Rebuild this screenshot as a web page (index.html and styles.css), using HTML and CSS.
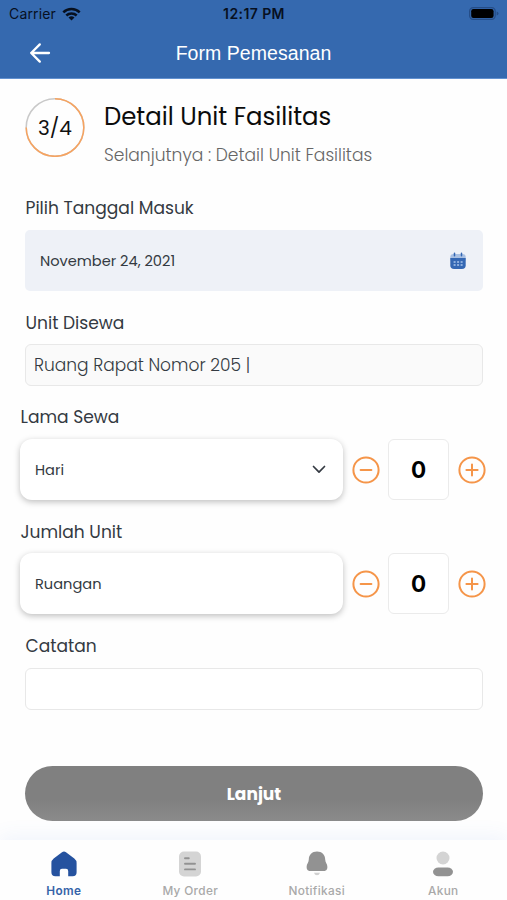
FILE: index.html
```html
<!DOCTYPE html>
<html lang="id">
<head>
<meta charset="utf-8">
<meta name="viewport" content="width=device-width, initial-scale=1">
<title>Form Pemesanan</title>
<link rel="stylesheet" href="styles.css">
</head>
<body>
<div class="screen">
  <header class="header">
    <div class="status">
      <div class="carrier"><span>Carrier</span>
        <svg width="19" height="14" viewBox="0 0 19 14" fill="none" stroke="#07101f" stroke-width="2.5"><path d="M1.3 5.4a11.7 11.7 0 0 1 16.4 0M4.3 8.5a7.5 7.5 0 0 1 10.4 0"/><path d="M9.5 13.6 6.5 10.6a4.3 4.3 0 0 1 6 0z" fill="#07101f" stroke="none"/></svg>
      </div>
      <span class="clock">12:17 PM</span>
      <svg class="battery" width="30" height="13" viewBox="0 0 30 13"><rect x=".6" y=".6" width="25.6" height="11.8" rx="3.6" fill="none" stroke="#254d87" stroke-width="1.2"/><rect x="2.2" y="2.1" width="22.4" height="8.8" rx="2.2" fill="#000"/><path d="M27.7 4.5q1.8.6 1.8 2t-1.8 2z" fill="#254d87"/></svg>
    </div>
    <div class="bar">
      <svg width="22" height="22" viewBox="0 0 22 22" fill="none" stroke="#fff" stroke-width="2.3" stroke-linecap="round" stroke-linejoin="round"><path d="M20 11H2.2M10.8 2.4 2.2 11l8.6 8.6"/></svg>
      <h1 class="bar-title">Form Pemesanan</h1>
    </div>
  </header>

  <main class="form">
    <section class="step">
      <div class="ring">
        <svg width="60" height="60" viewBox="0 0 60 60" fill="none" stroke-width="1.5"><circle cx="30" cy="30.500" r="28.8" stroke="#c9c9c9"/><path d="M30 1.7A28.8 28.8 0 1 1 1.2 30.5" stroke="#f7a35f"/></svg>
        <span class="ring-text">3/4</span>
      </div>
      <div class="step-text">
        <h2 class="step-title">Detail Unit Fasilitas</h2>
        <p class="step-next">Selanjutnya : Detail Unit Fasilitas</p>
      </div>
    </section>

    <div class="label label-date"><span>Pilih Tanggal Masuk</span></div>
    <div class="date">
      <span class="date-text">November 24, 2021</span>
      <svg width="16" height="18" viewBox="0 0 16 18"><rect x=".3" y="2" width="15.4" height="8" rx="3" fill="#a9c0e2"/><path d="M.3 6h15.4v7.2q0 3.8-3.8 3.8H4.1Q.3 17 .3 13.2z" fill="#3467b3"/><path d="M4.5 1.2v2.5M11.5 1.2v2.5" stroke="#3467b3" stroke-width="1.5" stroke-linecap="round"/><path d="M3.6 10h2m1.5 0h2m1.5 0h2M3.6 13h2m1.5 0h2m1.5 0h2" stroke="#a9c5ec" stroke-width="1.7"/></svg>
    </div>

    <div class="label label-unit"><span>Unit Disewa</span></div>
    <div class="field filled"><span class="room">Ruang Rapat Nomor 205 |</span></div>

    <div class="label label-wide label-duration"><span>Lama Sewa</span></div>
    <div class="quantity">
      <div class="card"><span class="day">Hari</span>
        <svg width="14" height="9" viewBox="0 0 14 9" fill="none" stroke="#343a42" stroke-width="1.7" stroke-linecap="round" stroke-linejoin="round"><path d="m1.5 1.5 5.5 5.6 5.5-5.6"/></svg>
      </div>
      <svg class="round" viewBox="0 0 28 28"><circle cx="14" cy="14" r="12.6"/><path d="M8.6 14h10.8"/></svg>
      <div class="count">0</div>
      <svg class="round" viewBox="0 0 28 28"><circle cx="14" cy="14" r="12.6"/><path d="M8.4 14h11.2M14 8.4v11.2"/></svg>
    </div>

    <div class="label label-wide label-amount"><span>Jumlah Unit</span></div>
    <div class="quantity">
      <div class="card"><span class="space">Ruangan</span></div>
      <svg class="round" viewBox="0 0 28 28"><circle cx="14" cy="14" r="12.6"/><path d="M8.6 14h10.8"/></svg>
      <div class="count">0</div>
      <svg class="round" viewBox="0 0 28 28"><circle cx="14" cy="14" r="12.6"/><path d="M8.4 14h11.2M14 8.4v11.2"/></svg>
    </div>

    <div class="label label-note"><span>Catatan</span></div>
    <div class="field"></div>
    <button class="next">Lanjut</button>
  </main>

  <nav class="tabs">
    <div class="tab active">
      <svg width="28" height="26" viewBox="0 0 28 26"><path d="M12 1.2q2-1.3 4 0l8.300 6.300q2.300 1.800 2.300 4.500v9.300q0 4-4 4h-4.400V20q0-2.200-2.200-2.200h-4q-2.200 0-2.200 2.200v5.300H5.400q-4 0-4-4V12q0-2.700 2.300-4.500z" fill="#25529f"/></svg>
      <span>Home</span>
    </div>
    <div class="tab orders">
      <svg width="28" height="26" viewBox="0 0 28 26"><rect x="3" y=".5" width="22" height="25" rx="5" fill="#d4d4d4"/><path d="M9 7.200h3.800M9 12.800h10M9 18.400h10" stroke="#929292" stroke-width="1.900" stroke-linecap="round"/></svg>
      <span>My Order</span>
    </div>
    <div class="tab alerts">
      <svg width="28" height="26" viewBox="0 0 28 26"><path d="M14 .5c5 0 8.200 3.300 8.200 8 0 3.200 2.200 4.200 2.200 7.400 0 3.100-1.500 4.200-4.800 4.200H8.400c-3.300 0-4.800-1.100-4.800-4.200 0-3.200 2.200-4.200 2.200-7.400 0-4.700 3.200-8 8.200-8z" fill="#929292"/><path d="M11 21.700h6q-.8 2.600-3 2.600t-3-2.600z" fill="#d0d0d0"/></svg>
      <span>Notifikasi</span>
    </div>
    <div class="tab account">
      <svg width="28" height="26" viewBox="0 0 28 26"><circle cx="14" cy="7" r="6.500" fill="#d4d4d4"/><rect x="4" y="16.400" width="20" height="8.800" rx="5.500" ry="4.400" fill="#929292"/></svg>
      <span>Akun</span>
    </div>
  </nav>
</div>
</body>
</html>
```
FILE: styles.css
```css
* { box-sizing: border-box; }
body, h1, h2, p { margin: 0; font-weight: 400; }
svg { display: block; flex: none; }
body {
  background: #fefefe;
  font-family: Poppins, Inter, "Noto Sans", sans-serif;
  color: #343a42;
  white-space: nowrap;
}
.screen { width: 507px; height: 900px; display: flex; flex-direction: column; overflow: hidden; }
.header { height: 79px; background: #3569af; border-bottom: 1px solid #6291d0; color: #fff; flex: none; }
.status {
  height: 27px; padding: 0 8px 0 9px;
  display: grid; grid-template-columns: 1fr auto 1fr; align-items: center;
  color: #07101f; font: 14px/27px Inter, sans-serif;
}
.carrier { display: flex; align-items: center; gap: 6px; letter-spacing: .15px; }
.clock { font-weight: 600; font-size: 14px; letter-spacing: .4px; }
.battery { justify-self: end; }
.bar { height: 51px; display: grid; grid-template-columns: 60px 1fr 60px; align-items: center; }
.bar svg { margin-left: 29px; }
.bar-title { font: 19.5px/52px "Liberation Sans", sans-serif; letter-spacing: .05px; text-align: center; }

.form { height: 761px; padding: 18px 24px 0 25px; flex: none; }
.step { display: flex; gap: 19px; height: 76px; }
.ring { display: grid; width: 60px; height: 60px; place-items: center; color: #111; }
.ring > * { grid-area: 1 / 1; }
.ring-text { font-size: 20px; padding-top: 1px; }
.step-title { height: 38px; line-height: 39px; font-size: 24.4px; color: #0b0b0b; }
.step-next { height: 38px; line-height: 40px; font-size: 17.1px; font-weight: 300; color: #666; }
.label { height: 44px; line-height: 45px; font-size: 17.1px; padding-left: .5px; }
.label-wide { margin-left: -5px; }
.label-date { margin-top: 13px; }
.date {
  height: 61px; padding: 0 17px 0 15px; border-radius: 5px; background: #eef1f7;
  display: flex; align-items: center; justify-content: space-between; font-size: 14.6px;
}
.date-text, .day, .space { padding-top: 1px; }
.label-unit { height: 53px; line-height: 64px; }
.field { height: 42px; border: 1px solid #e8e8e8; border-radius: 6px; padding: 0 8px; background: #fff; }
.filled { background: #fafafa; font-size: 17.05px; line-height: 41px; font-weight: 300; }
.label-duration { height: 53px; line-height: 63px; }
.quantity { height: 61px; margin-left: -5px; margin-right: -3px; display: flex; align-items: center; }
.card {
  width: 323px; height: 61px; padding: 0 17px 0 15px; border-radius: 12px; background: #fff; flex: none;
  box-shadow: 0 2px 6px rgba(0, 0, 0, .25);
  display: flex; align-items: center; justify-content: space-between; font-size: 14.6px;
}
.round { width: 28px; height: 28px; margin: 0 8.500px; fill: none; stroke: #f59549; stroke-width: 2; stroke-linecap: round; }
.count {
  flex: none; width: 61px; height: 61px; border: 1px solid #ebebeb; border-radius: 6px; background: #fff;
  color: #000; font: 700 22.500px/60px Inter, sans-serif; text-align: center;
}
.label-amount { height: 53px; line-height: 64px; }
.label-note { height: 54px; line-height: 65px; }
.next {
  display: block; width: 458px; height: 55px; margin-top: 56px; padding: 1px 0 0; border: 0; border-radius: 28px;
  background: linear-gradient(#808080 60%, #8b8b8b); color: #fff;
  font: 700 17px/54px Poppins, Inter, sans-serif;
}
.tabs {
  height: 60px; padding-left: .5px; flex: none; display: grid; grid-template-columns: repeat(4, 126.5px);
  background: #fefefe; box-shadow: 0 -4px 18px rgba(80, 130, 230, .08);
}
.tab { display: flex; flex-direction: column; align-items: center; padding-top: 10.500px; color: #a9a9a9; font: 500 11.800px/28px Inter, sans-serif; letter-spacing: .35px; }
.active { color: #3563a8; font-weight: 600; }
```
